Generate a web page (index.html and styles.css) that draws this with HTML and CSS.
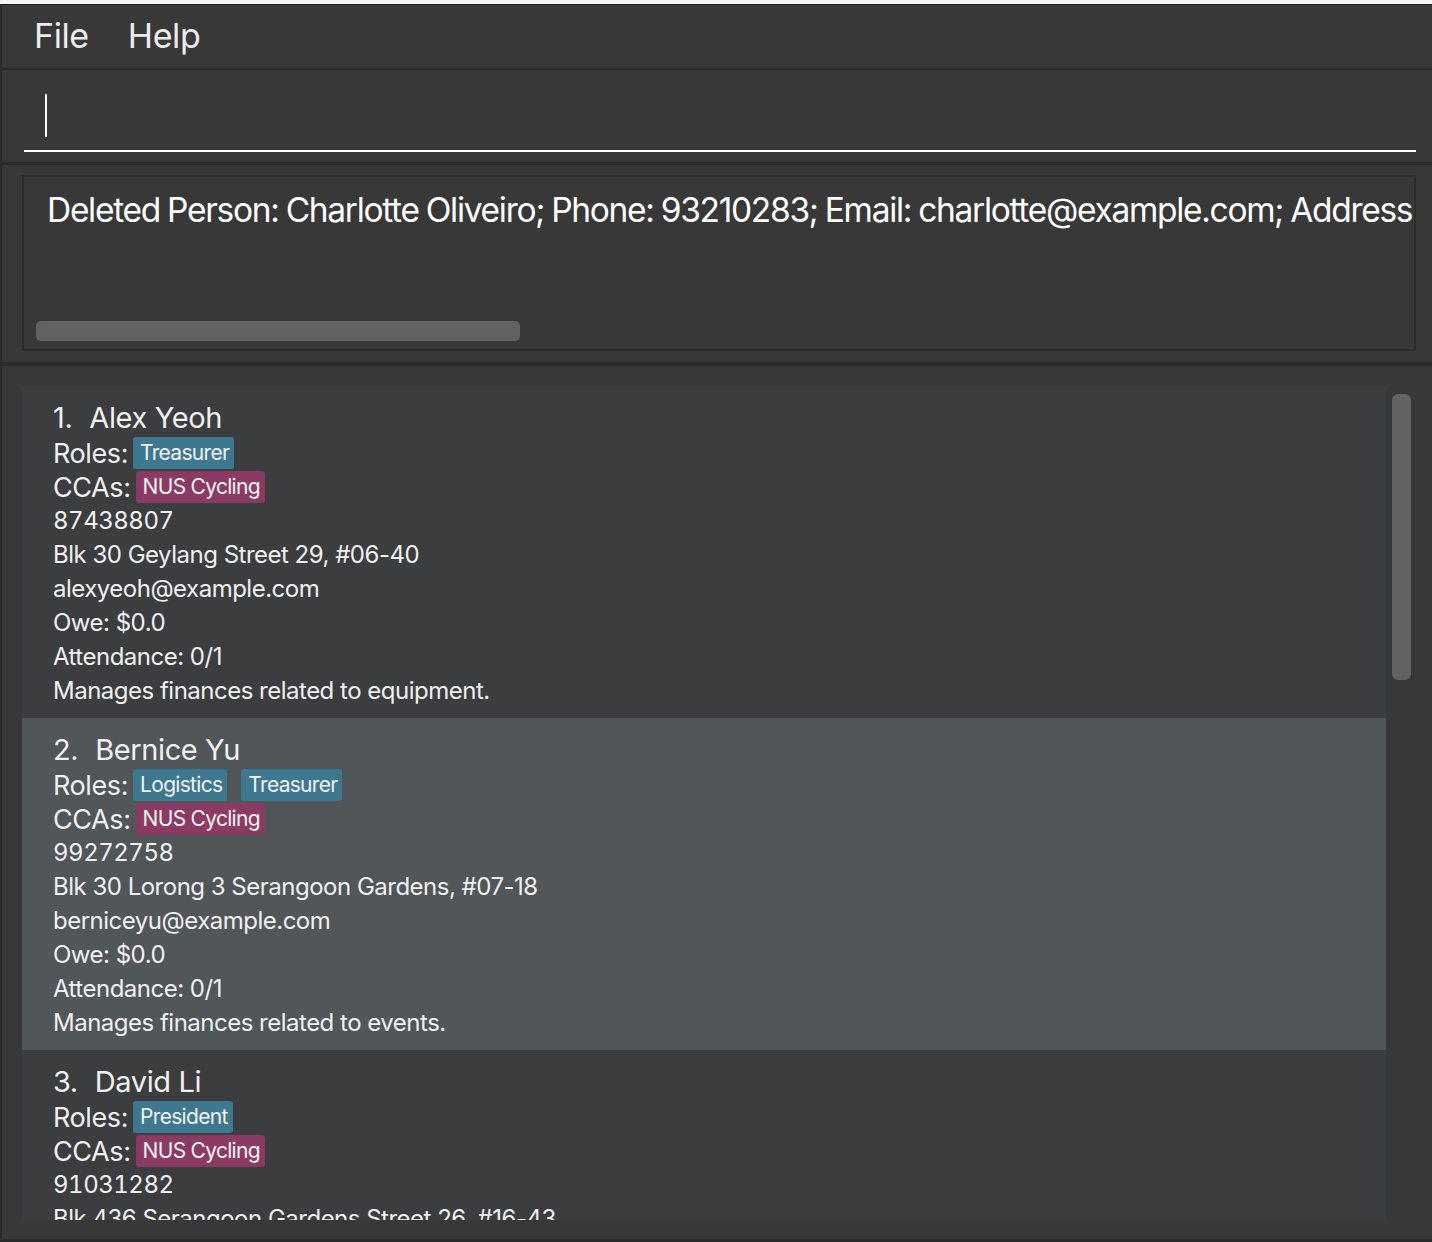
FILE: index.html
```html
<!DOCTYPE html>
<html>
<head>
<meta charset="utf-8">
<link rel="stylesheet" href="styles.css">
</head>
<body>
<div class="topstrip"></div>
<div class="app">
  <div class="menubar">
    <span class="menu-item">File</span>
    <span class="menu-item">Help</span>
  </div>
  <div class="command">
    <div class="command-field"><span class="caret"></span></div>
  </div>
  <div class="result">
    <div class="result-box">
      <div class="result-text">Deleted Person: Charlotte Oliveiro; Phone: 93210283; Email: charlotte@example.com; Address</div>
      <div class="hscroll"><div class="hthumb"></div></div>
    </div>
  </div>
  <div class="list">
    <div class="cards">
      <div class="card">
        <div class="name"><span class="idx">1.</span>Alex Yeoh</div>
        <div class="tagline"><span class="label">Roles:</span><span class="tag role">Treasurer</span></div>
        <div class="tagline"><span class="label">CCAs:</span><span class="tag cca">NUS Cycling</span></div>
        <div class="field">87438807</div>
        <div class="field">Blk 30 Geylang Street 29, #06-40</div>
        <div class="field">alexyeoh@example.com</div>
        <div class="field">Owe: $0.0</div>
        <div class="field">Attendance: 0/1</div>
        <div class="field">Manages finances related to equipment.</div>
      </div>
      <div class="card selected">
        <div class="name"><span class="idx">2.</span>Bernice Yu</div>
        <div class="tagline"><span class="label">Roles:</span><span class="tag role">Logistics</span><span class="tag role">Treasurer</span></div>
        <div class="tagline"><span class="label">CCAs:</span><span class="tag cca">NUS Cycling</span></div>
        <div class="field">99272758</div>
        <div class="field">Blk 30 Lorong 3 Serangoon Gardens, #07-18</div>
        <div class="field">berniceyu@example.com</div>
        <div class="field">Owe: $0.0</div>
        <div class="field">Attendance: 0/1</div>
        <div class="field">Manages finances related to events.</div>
      </div>
      <div class="card">
        <div class="name"><span class="idx">3.</span>David Li</div>
        <div class="tagline"><span class="label">Roles:</span><span class="tag role">President</span></div>
        <div class="tagline"><span class="label">CCAs:</span><span class="tag cca">NUS Cycling</span></div>
        <div class="field">91031282</div>
        <div class="field">Blk 436 Serangoon Gardens Street 26, #16-43</div>
        <div class="field">davidli@example.com</div>
        <div class="field">Owe: $0.0</div>
        <div class="field">Attendance: 0/1</div>
      </div>
    </div>
    <div class="vscroll"><div class="vthumb"></div></div>
  </div>
</div>
</body>
</html>
```
FILE: styles.css
```css
* { box-sizing: border-box; }
html, body {
  margin: 0;
  padding: 0;
  background: #383838;
  overflow: hidden;
  font-family: "Inter", "Noto Sans", sans-serif;
  color: #f0f0f0;
}
.topstrip {
  height: 4px;
  background: #f4f4f4;
}
.app {
  height: 1238px;
  border-top: 1px solid #1e1e1e;
  border-left: 2px solid #2b2b2b;
  border-bottom: 3px solid #2b2b2b;
  background: #383838;
  display: flex;
  flex-direction: column;
}
.menubar {
  height: 65px;
  border-bottom: 2px solid #2b2b2b;
  display: flex;
  align-items: center;
  padding-left: 32px;
  gap: 39px;
  padding-bottom: 2px;
}
.menu-item {
  font-size: 34px;
  color: #ececec;
  letter-spacing: -0.4px;
}
.command {
  height: 95px;
  border-bottom: 3px solid #2b2b2b;
  padding: 0 16px 0 22px;
}
.command-field {
  height: 82px;
  border-bottom: 2px solid #ffffff;
  padding-top: 24px;
  padding-left: 21px;
}
.caret {
  display: block;
  width: 2px;
  height: 43px;
  background: #ffffff;
}
.result {
  height: 201px;
  border-bottom: 4px solid #2b2b2b;
  padding: 10px 16px 0 20px;
}
.result-box {
  height: 176px;
  border: 2px solid #2c2c2c;
  overflow: hidden;
  position: relative;
}
.result-text {
  white-space: nowrap;
  font-size: 33.5px;
  color: #ffffff;
  padding: 13px 0 0 23px;
  letter-spacing: -1.3px;
  word-spacing: -1px;
}
.hscroll {
  position: absolute;
  left: 12px;
  top: 144px;
}
.hthumb {
  width: 484px;
  height: 20px;
  border-radius: 5px;
  background: #626262;
}
.list {
  flex: 1;
  display: flex;
  padding: 20px 0 0 20px;
  overflow: hidden;
}
.cards {
  width: 1364px;
  height: 834px;
  overflow: hidden;
}
.vscroll {
  width: 46px;
  padding: 8px 0 0 6px;
}
.vthumb {
  width: 19px;
  height: 286px;
  border-radius: 6px;
  background: #626262;
}
.card {
  height: 332px;
  background: #3c3d3f;
  padding: 14px 0 0 31px;
}
.card.selected {
  background: #515659;
}
.name {
  height: 36px;
  line-height: 36px;
  font-size: 29px;
  letter-spacing: -0.4px;
}
.idx {
  margin-right: 17px;
}
.tagline {
  height: 34px;
  display: flex;
  align-items: center;
}
.label {
  font-size: 27px;
  margin-right: 5px;
  letter-spacing: -0.4px;
}
.tag {
  height: 32px;
  line-height: 32px;
  font-size: 21px;
  padding: 0 5px 0 7px;
  border-radius: 3px;
  color: #f2f2f2;
  margin-right: 14px;
  letter-spacing: -0.7px;
}
.tag.role { background: #3d7890; }
.tag.cca { background: #8b3b63; }
.field {
  height: 34px;
  line-height: 34px;
  font-size: 24px;
  letter-spacing: -0.5px;
}
.field.num, .field:nth-child(4) {
  font-feature-settings: "tnum" 1;
}
```
